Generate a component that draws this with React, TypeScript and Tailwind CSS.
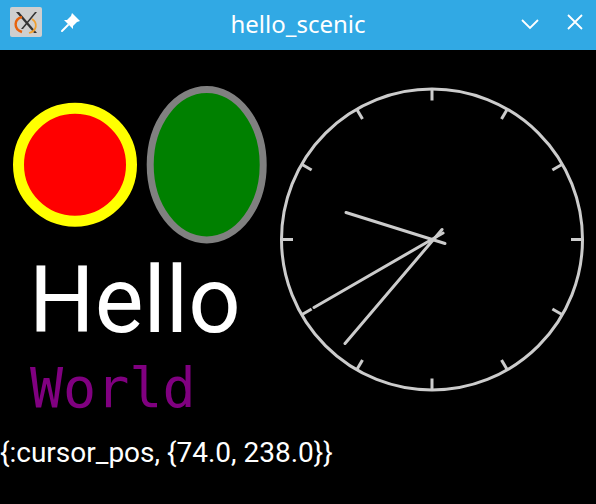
import React from "react";

const CX = 432;
const CY = 189.5;

function polar(r: number, deg: number) {
  const a = (deg * Math.PI) / 180;
  return [CX + r * Math.sin(a), CY - r * Math.cos(a)];
}

function Drawing() {
  const ticks = Array.from({ length: 12 }, (_, i) => i * 30);
  return (
    <svg className="absolute inset-0" width={596} height={454} viewBox="0 0 596 454">
      <circle cx={75} cy={114.7} r={56.5} fill="#ff0000" stroke="#ffff00" strokeWidth={11} />
      <ellipse cx={206.7} cy={114.7} rx={56.5} ry={75.2} fill="#008000" stroke="#808080" strokeWidth={7} />
      <circle cx={CX} cy={CY} r={150.5} fill="none" stroke="#cccccc" strokeWidth={3} />
      {ticks.map((d) => {
        const [x1, y1] = polar(139, d);
        const [x2, y2] = polar(150.5, d);
        return <line key={d} x1={x1} y1={y1} x2={x2} y2={y2} stroke="#cccccc" strokeWidth={3} />;
      })}
      <line x1={445} y1={193.5} x2={346} y2={162.5} stroke="#cccccc" strokeWidth={3} strokeLinecap="round" />
      <line x1={443} y1={183} x2={314} y2={257.5} stroke="#cccccc" strokeWidth={3} strokeLinecap="round" />
      <line x1={442} y1={179.5} x2={345} y2={293.5} stroke="#cccccc" strokeWidth={3} strokeLinecap="round" />
    </svg>
  );
}

function AppIcon() {
  return (
    <svg width={32} height={30} viewBox="0 0 32 30">
      <rect x={0} y={0} width={32} height={30} rx={2} fill="#cfcfcf" />
      <path d="M6 5 L24 26 L27 26 L9 5 Z" fill="#333" />
      <path d="M25 5 L11 22 L13 22 L27 5 Z" fill="#333" />
      <path d="M12 10 C4 12 3 22 12 25" fill="none" stroke="#e8620c" strokeWidth={2.4} />
      <path d="M22 12 C28 16 27 24 19 26" fill="none" stroke="#f0a030" strokeWidth={1.8} />
    </svg>
  );
}

function PinIcon() {
  return (
    <svg width={24} height={24} viewBox="0 0 24 24">
      <path d="M13 3 L21 11 L18 12 L14 16 L14 19 L5 10 L8 10 L12 6 Z" fill="#ffffff" />
      <path d="M9 15 L3 21" stroke="#ffffff" strokeWidth={2} strokeLinecap="round" />
    </svg>
  );
}

export default function App() {
  return (
    <div className="w-[596px] h-[504px] bg-black flex flex-col overflow-hidden">
      <div className="h-[50px] bg-[#31a9e4] flex items-center relative shrink-0">
        <div className="ml-[10px] mt-[-6px]">
          <AppIcon />
        </div>
        <div className="ml-[17px] mt-[-6px]">
          <PinIcon />
        </div>
        <div className="absolute left-0 right-0 top-[12px] text-center text-white text-[24px] leading-none [font-family:'Noto_Sans',sans-serif] pointer-events-none">
          hello_scenic
        </div>
        <div className="ml-auto mr-[12px] flex items-center gap-[26px] mt-[-6px]">
          <svg width={20} height={14} viewBox="0 0 20 14" className="mt-[3px]">
            <path d="M2 3 L10 11 L18 3" fill="none" stroke="#ffffff" strokeWidth={1.8} />
          </svg>
          <svg width={18} height={18} viewBox="0 0 18 18">
            <path d="M2 2 L16 16 M16 2 L2 16" fill="none" stroke="#ffffff" strokeWidth={1.8} />
          </svg>
        </div>
      </div>
      <div className="relative flex-1">
        <Drawing />
        <div className="absolute left-[29px] top-[205px] text-white text-[92px] leading-none [font-family:Roboto,sans-serif]">
          Hello
        </div>
        <div className="absolute left-[30px] top-[311px] text-[#800080] text-[55px] leading-none [font-family:'DejaVu_Sans_Mono',monospace]">
          World
        </div>
        <div className="absolute left-[0px] top-[389px] text-white text-[28px] leading-none [font-family:Roboto,sans-serif]">
          {"{:cursor_pos, {74.0, 238.0}}"}
        </div>
      </div>
    </div>
  );
}
